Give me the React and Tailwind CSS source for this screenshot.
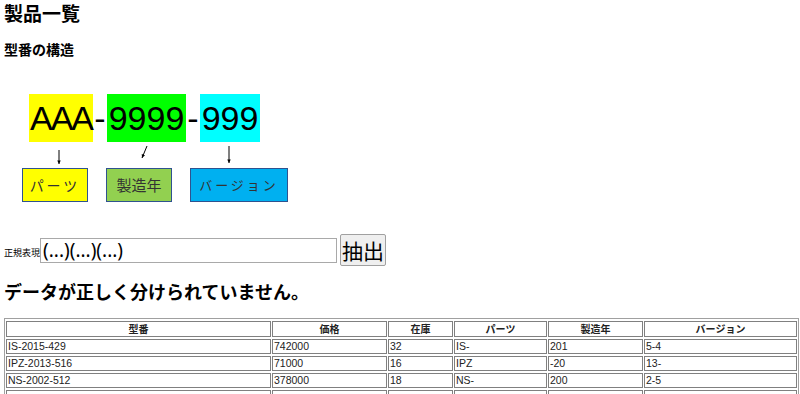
const rows = [
  ['IS-2015-429', '742000', '32', 'IS-', '201', '5-4'],
  ['IPZ-2013-516', '71000', '16', 'IPZ', '-20', '13-'],
  ['NS-2002-512', '378000', '18', 'NS-', '200', '2-5'],
  ['\u00a0', '\u00a0', '\u00a0', '\u00a0', '\u00a0', '\u00a0'],
]

const headers = [
  ['型番', 'w-[265px]'],
  ['価格', 'w-[115px]'],
  ['在庫', 'w-[65px]'],
  ['パーツ', 'w-[93px]'],
  ['製造年', 'w-[95px]'],
  ['バージョン', 'w-[153px]'],
]

function Arrow({ className, x1, y1, x2, y2 }) {
  // small down arrow from the diagram
  const a = Math.atan2(y2 - y1, x2 - x1)
  const l = 4
  const p1 = [x2 - l * Math.cos(a - 0.45), y2 - l * Math.sin(a - 0.45)]
  const p2 = [x2 - l * Math.cos(a + 0.45), y2 - l * Math.sin(a + 0.45)]
  return (
    <svg className={`absolute ${className}`} width="12" height="20" viewBox="0 0 12 20">
      <line x1={x1} y1={y1} x2={x2} y2={y2} stroke="#000" strokeWidth="1" />
      <polygon points={`${x2},${y2} ${p1[0]},${p1[1]} ${p2[0]},${p2[1]}`} fill="#000" />
    </svg>
  )
}

function Diagram() {
  return (
    <div className="relative w-[290px] h-[108px] mt-[35px]">
      <div className="flex items-center h-[48px] ml-[25px] text-black text-[34px] leading-none font-['Liberation_Sans',sans-serif]">
        <div className="w-[64px] h-[48px] bg-[#ffff00] flex items-center justify-center tracking-[-2px]">AAA</div>
        <div className="w-[14px] flex justify-center">-</div>
        <div className="w-[79px] h-[48px] bg-[#00ff00] flex items-center justify-center">9999</div>
        <div className="w-[14px] flex justify-center">-</div>
        <div className="w-[60px] h-[48px] bg-[#00ffff] flex items-center justify-center">999</div>
      </div>

      <Arrow className="left-[49px] top-[54px]" x1={6} y1={2} x2={6} y2={16} />
      <Arrow className="left-[134px] top-[51px]" x1={9} y1={1} x2={4} y2={13} />
      <Arrow className="left-[219px] top-[52px]" x1={6} y1={0} x2={6} y2={17} />

      <div className="absolute left-[18px] top-[74px] w-[66px] h-[34px] bg-[#ffff00] border border-[#2f528f] flex items-center justify-center text-[14px] tracking-[3px] text-[#333]">
        パーツ
      </div>
      <div className="absolute left-[102px] top-[74px] w-[66px] h-[34px] bg-[#92d050] border border-[#2f528f] flex items-center justify-center text-[15px] text-[#333]">
        製造年
      </div>
      <div className="absolute left-[186px] top-[74px] w-[98px] h-[34px] bg-[#00b0f0] border border-[#2f528f] flex items-center justify-center text-[13px] tracking-[3px] text-[#333]">
        バージョン
      </div>
    </div>
  )
}

export default function App() {
  return (
    <div className="bg-white min-h-[394px] px-[4px] text-black font-['Noto_Sans_CJK_JP',sans-serif]">
      <h1 className="text-[19px] leading-[25px] font-bold">製品一覧</h1>
      <h2 className="mt-[14px] text-[14px] leading-[20px] font-bold">型番の構造</h2>

      <Diagram />

      <div className="flex items-center mt-[32px] h-[32px]">
        <span className="text-[9px] leading-none mt-[4px]">正規表現</span>
        <input
          className="w-[297px] h-[25px] border border-[#a9a9a9] px-[2px] text-[19px] leading-none font-['Noto_Sans',sans-serif] outline-none"
          defaultValue="(...)(...)(...)"
        />
        <button className="ml-[3px] w-[46px] h-[32px] bg-[#efefef] border border-[#a0a0a0] rounded-[2px] text-[21px] leading-none">
          抽出
        </button>
      </div>

      <h2 className="mt-[13px] text-[18px] leading-[24px] font-bold">データが正しく分けられていません。</h2>

      <table className="mt-[15px] w-[795px] table-fixed border-separate border-spacing-x-[1px] border-spacing-y-[2px] border border-[#a0a0a0] text-[#222]">
        <thead>
          <tr>
            {headers.map(([h, w]) => (
              <th key={h} className={`${w} border border-[#808080] px-[1px] py-[1px] text-[10px] leading-[12px] font-bold text-center`}>
                {h}
              </th>
            ))}
          </tr>
        </thead>
        <tbody>
          {rows.map((r, i) => (
            <tr key={i}>
              {r.map((c, j) => (
                <td key={j} className="border border-[#808080] px-[1px] py-0 text-[10.5px] leading-[13px] font-['Liberation_Sans','Noto_Sans_CJK_JP',sans-serif]">
                  {c}
                </td>
              ))}
            </tr>
          ))}
        </tbody>
      </table>
    </div>
  )
}
